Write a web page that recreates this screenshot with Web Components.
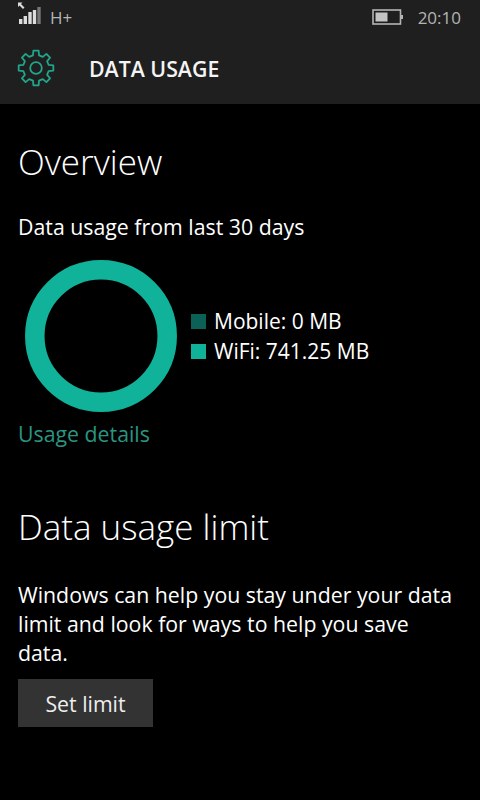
<!DOCTYPE html>
<html>
<head>
<meta charset="utf-8">
<style>
  html, body { margin: 0; background: #000; }
  body { width: 480px; height: 800px; overflow: hidden; font-family: "Open Sans", "Noto Sans", sans-serif; color: #fff; }
</style>
</head>
<body>
<status-bar></status-bar>
<app-header>DATA USAGE</app-header>
<main-content>
  <section-title style="--top:30px">Overview</section-title>
  <body-text style="--top:22px">Data usage from last 30 days</body-text>
  <usage-chart></usage-chart>
  <link-text>Usage details</link-text>
  <section-title style="--top:50px">Data usage limit</section-title>
  <body-text style="--top:25px">Windows can help you stay under your data limit and look for ways to help you save data.</body-text>
  <action-button>Set limit</action-button>
</main-content>

<script>
// Barra de estado del teléfono
class StatusBar extends HTMLElement {
  constructor() {
    super();
    this.attachShadow({ mode: 'open' });
  }
  connectedCallback() {
    this.shadowRoot.innerHTML = `
      <style>
        :host { display: flex; align-items: center; height: 36px; background: #1f1f1f; color: #b4b4b4; font-size: 17px; box-sizing: border-box; padding: 0 19px 2px 18px; }
        svg { display: block; }
        .signal { align-self: flex-start; margin-top: 1px; }
        .net { margin-left: 8px; font-size: 17px; margin-top: 1px; }
        .right { margin-left: auto; display: flex; align-items: center; gap: 15px; }
      </style>
      <svg class="signal" width="24" height="24" viewBox="0 0 24 24">
        <path d="M0 1.500 L4.500 1.500 L3 3 L6.500 6.500 L5 8 L1.500 4.500 L0 6 Z" fill="#ddd"/>
        <rect x="1" y="18" width="3.400" height="5" fill="#ddd"/>
        <rect x="5.600" y="15" width="3.400" height="8" fill="#ddd"/>
        <rect x="10.300" y="11" width="3.400" height="12" fill="#ddd"/>
        <rect x="14.800" y="9" width="3.400" height="14" fill="#ddd"/>
        <rect x="19.300" y="6" width="3.400" height="17" fill="#777"/>
      </svg>
      <span class="net">H+</span>
      <div class="right">
        <svg width="31" height="16" viewBox="0 0 31 16">
          <rect x="1" y="1" width="27.500" height="14" fill="none" stroke="#b4b4b4" stroke-width="1.600"/>
          <rect x="3.500" y="3.500" width="12" height="9" fill="#c4c4c4"/>
          <rect x="29" y="6" width="2" height="4" fill="#b4b4b4"/>
        </svg>
        <span>20:10</span>
      </div>
    `;
  }
}

// Cabecera con el engranaje y el título
class AppHeader extends HTMLElement {
  constructor() {
    super();
    this.attachShadow({ mode: 'open' });
  }
  connectedCallback() {
    this.shadowRoot.innerHTML = `
      <style>
        :host { display: flex; align-items: center; height: 68px; background: #1f1f1f; padding: 0 0 4px 17px; box-sizing: border-box; }
        svg { display: block; }
        span { margin-left: 34px; font-size: 21.3px; font-weight: 600; color: #f4f4f4; }
      </style>
      <svg width="38" height="38" viewBox="-19 -19 38 38">
        <path d="${this.gearPath(8, 17.500, 13)}" fill="none" stroke="#20a68a" stroke-width="1.800" stroke-linejoin="round"/>
        <circle r="5.800" fill="none" stroke="#20a68a" stroke-width="1.800"/>
      </svg>
      <span><slot></slot></span>
    `;
  }

  // Genera el contorno de la rueda dentada, con un diente arriba
  gearPath(teeth, outer, inner) {
    const pts = [];
    const step = Math.PI * 2 / teeth;
    for (let i = 0; i < teeth; i++) {
      const a = i * step - Math.PI / 2;
      [[inner, -0.3], [outer, -0.19], [outer, 0.19], [inner, 0.3]].forEach(([r, k]) => {
        const b = a + k * step;
        pts.push((r * Math.cos(b)).toFixed(2) + ' ' + (r * Math.sin(b)).toFixed(2));
      });
    }
    return 'M' + pts.join('L') + 'Z';
  }
}

class MainContent extends HTMLElement {
  constructor() {
    super();
    this.attachShadow({ mode: 'open' });
  }
  connectedCallback() {
    this.shadowRoot.innerHTML = `
      <style>
        :host { display: flex; flex-direction: column; align-items: flex-start; padding: 0 18px; }
      </style>
      <slot></slot>
    `;
  }
}

class SectionTitle extends HTMLElement {
  constructor() {
    super();
    this.attachShadow({ mode: 'open' });
  }
  connectedCallback() {
    this.shadowRoot.innerHTML = `
      <style>
        :host { display: block; margin-top: var(--top, 0); font-size: 35px; font-weight: 300; line-height: 56px; height: 56px; }
      </style>
      <slot></slot>
    `;
  }
}

class BodyText extends HTMLElement {
  constructor() {
    super();
    this.attachShadow({ mode: 'open' });
  }
  connectedCallback() {
    this.shadowRoot.innerHTML = `
      <style>
        :host { display: block; margin-top: var(--top, 0); font-size: 21.3px; line-height: 29px; width: 440px; }
      </style>
      <slot></slot>
    `;
  }
}

// Anillo de uso y leyenda
class UsageChart extends HTMLElement {
  constructor() {
    super();
    this.attachShadow({ mode: 'open' });
  }
  connectedCallback() {
    this.shadowRoot.innerHTML = `
      <style>
        :host { display: flex; align-items: center; margin-top: 19px; margin-left: 7px; }
        svg { display: block; }
        .legend { margin-left: 14px; font-size: 21px; line-height: 30px; }
        .row { display: flex; align-items: center; gap: 8px; }
        .sw { width: 15px; height: 15px; }
      </style>
      <svg width="152" height="152" viewBox="0 0 152 152">
        <circle cx="76" cy="76" r="66.200" fill="none" stroke="#10b29a" stroke-width="19.500"/>
      </svg>
      <div class="legend">
        <div class="row"><span class="sw" style="background:#0b6155"></span><span>Mobile: 0 MB</span></div>
        <div class="row"><span class="sw" style="background:#10b29a"></span><span>WiFi: 741.25 MB</span></div>
      </div>
    `;
  }
}

class LinkText extends HTMLElement {
  constructor() {
    super();
    this.attachShadow({ mode: 'open' });
  }
  connectedCallback() {
    this.shadowRoot.innerHTML = `
      <style>
        :host { display: block; font-size: 21.3px; line-height: 30px; margin-top: 7px; color: #2a9580; }
      </style>
      <slot></slot>
    `;
  }
}

class ActionButton extends HTMLElement {
  constructor() {
    super();
    this.attachShadow({ mode: 'open' });
  }
  connectedCallback() {
    this.shadowRoot.innerHTML = `
      <style>
        :host { display: flex; align-items: center; justify-content: center; width: 135px; height: 48px; margin-top: 12px; background: #333; color: #eee; font-size: 21.3px; cursor: pointer; }
      </style>
      <slot></slot>
    `;
  }
}

customElements.define('status-bar', StatusBar);
customElements.define('app-header', AppHeader);
customElements.define('main-content', MainContent);
customElements.define('section-title', SectionTitle);
customElements.define('body-text', BodyText);
customElements.define('usage-chart', UsageChart);
customElements.define('link-text', LinkText);
customElements.define('action-button', ActionButton);
</script>
</body>
</html>
